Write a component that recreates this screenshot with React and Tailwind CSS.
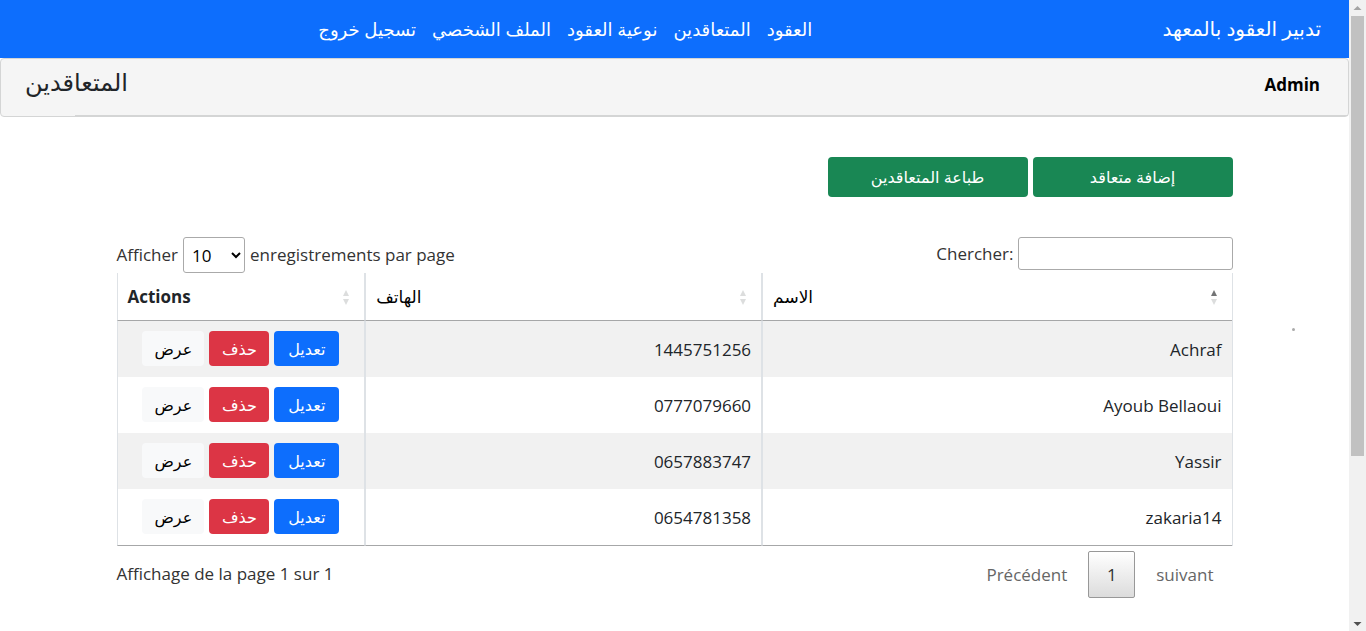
const navLinks = ['العقود', 'المتعاقدين', 'نوعية العقود', 'الملف الشخصي', 'تسجيل خروج'];

const people = [
  { name: 'Achraf', phone: '1445751256' },
  { name: 'Ayoub Bellaoui', phone: '0777079660' },
  { name: 'Yassir', phone: '0657883747' },
  { name: 'zakaria14', phone: '0654781358' },
];

function SortIcon({ ascending }) {
  return (
    <svg width="8" height="16" viewBox="0 0 8 16" className="shrink-0" aria-hidden="true">
      <path d="M4 1 L7 7 H1 Z" fill={ascending ? '#737475' : '#dcdddd'} />
      <path d="M4 16 L7 10 H1 Z" fill="#dcdddd" />
    </svg>
  );
}

function HeaderCell({ label, ascending, className = '', textClass = '' }) {
  return (
    <th scope="col" className={`h-12 border-[#dee2e6] border-b border-b-[#a6a7a8] px-[10px] text-left ${className}`}>
      <div dir="ltr" className="flex items-center justify-between pr-1">
        <span className={textClass}>{label}</span>
        <SortIcon ascending={ascending} />
      </div>
    </th>
  );
}

function ScrollRail() {
  return (
    <div aria-hidden="true" className="sticky top-0 flex h-screen w-[17px] shrink-0 flex-col items-center bg-[#f1f1f1]">
      <svg width="17" height="16" viewBox="0 0 17 16">
        <path d="M8.5 6 L12.5 10 H4.5 Z" fill="#a3a3a3" />
      </svg>
      <div className="h-[440px] w-[13px] bg-[#c1c1c1]" />
      <svg width="17" height="16" viewBox="0 0 17 16" className="mt-auto">
        <path d="M8.5 11 L4.5 7 H12.5 Z" fill="#505050" />
      </svg>
    </div>
  );
}

export default function App() {
  return (
    <div dir="ltr" className="flex min-h-screen bg-white font-['Open_Sans','DejaVu_Sans',sans-serif] text-[17px] leading-6 text-[#212529]">
      <div dir="rtl" className="min-w-0 flex-1">
        <nav className="flex h-[58px] items-center bg-[#0d6efd] pr-7 text-white">
          <a href="#" className="text-xl">تدبير العقود بالمعهد</a>
          <ul className="flex flex-1 items-center justify-center gap-4 pr-8 text-lg">
            {navLinks.map((link) => (
              <li key={link}><a href="#">{link}</a></li>
            ))}
          </ul>
        </nav>

        <header className="flex h-[59px] flex-col rounded border border-[#d4d5d5] bg-[#f5f5f5]">
          <div className="flex flex-1 items-center justify-between pr-7 pb-1 pl-6">
            <span className="font-bold text-black">Admin</span>
            <h1 className="pb-1.5 text-2xl">المتعاقدين</h1>
          </div>
          <div className="ml-[74px] h-px bg-[#d4d5d5]" />
        </header>

        <main className="relative mx-auto max-w-[1140px] px-3 pt-10">
          <div className="flex gap-[5px] text-base text-white">
            <button type="button" className="h-10 w-[200px] rounded bg-[#198754]">إضافة متعاقد</button>
            <button type="button" className="h-10 w-[200px] rounded bg-[#198754]">طباعة المتعاقدين</button>
          </div>

          <div dir="ltr" className="mt-10 flex items-start justify-between text-[#333]">
            <label className="flex items-center gap-[5px]">
              Afficher
              <select defaultValue="10" className="h-9 w-[62px] rounded-[3px] border border-[#aaa] bg-white px-1 text-black">
                <option>10</option>
                <option>25</option>
                <option>50</option>
                <option>100</option>
              </select>
              enregistrements par page
            </label>
            <label className="flex items-center gap-1">
              Chercher:
              <input type="search" className="h-[33px] w-[215px] rounded-[3px] border border-[#aaa] bg-white px-1" />
            </label>
          </div>

          <table className="w-full table-fixed border-separate border-spacing-0 border-r border-[#dee2e6]">
            <colgroup>
              <col className="w-[42.1%]" />
              <col className="w-[35.6%]" />
              <col className="w-[22.3%]" />
            </colgroup>
            <thead>
              <tr>
                <HeaderCell label="الاسم" ascending className="border-l" textClass="font-medium text-black" />
                <HeaderCell label="الهاتف" className="border-x" textClass="font-medium text-black" />
                <HeaderCell label="Actions" className="border-x" />
              </tr>
            </thead>
            <tbody>
              {people.map((person) => (
                <tr key={person.name} className="h-14 last:h-[57px] odd:bg-[#f1f1f1] last:[&>td]:border-b last:[&>td]:border-b-[#a6a7a8]">
                  <td className="border-l border-[#dee2e6] px-[10px] pt-[2px]">{person.name}</td>
                  <td className="border-x border-[#dee2e6] px-[10px] pt-[2px]">{person.phone}</td>
                  <td className="border-x border-[#dee2e6] px-[10px] pb-px">
                    <div className="flex justify-center gap-[5px] text-base">
                      <button type="button" className="h-[35px] w-[65px] rounded bg-[#0d6efd] text-white">تعديل</button>
                      <button type="button" className="h-[35px] w-[60px] rounded bg-[#dc3545] text-white">حذف</button>
                      <button type="button" className="h-[35px] w-[62px] rounded bg-[#f8f9fa] text-black">عرض</button>
                    </div>
                  </td>
                </tr>
              ))}
            </tbody>
          </table>

          <div dir="ltr" className="flex items-start justify-between pt-[5px] text-[#333]">
            <p className="pt-[11px]">Affichage de la page 1 sur 1</p>
            <div className="flex h-[47px] gap-[2px]">
              <button type="button" className="px-[19px] text-[#666]">Précédent</button>
              <button type="button" className="w-[47px] rounded-xs border border-[#989898] bg-linear-to-b from-white to-[#dcdcdc]">1</button>
              <button type="button" className="px-[19px] text-[#666]">suivant</button>
            </div>
          </div>

          <span aria-hidden="true" className="absolute top-[211px] -right-[50px] size-[3px] rounded-full bg-[#aaa]" />
        </main>
      </div>
      <ScrollRail />
    </div>
  );
}
